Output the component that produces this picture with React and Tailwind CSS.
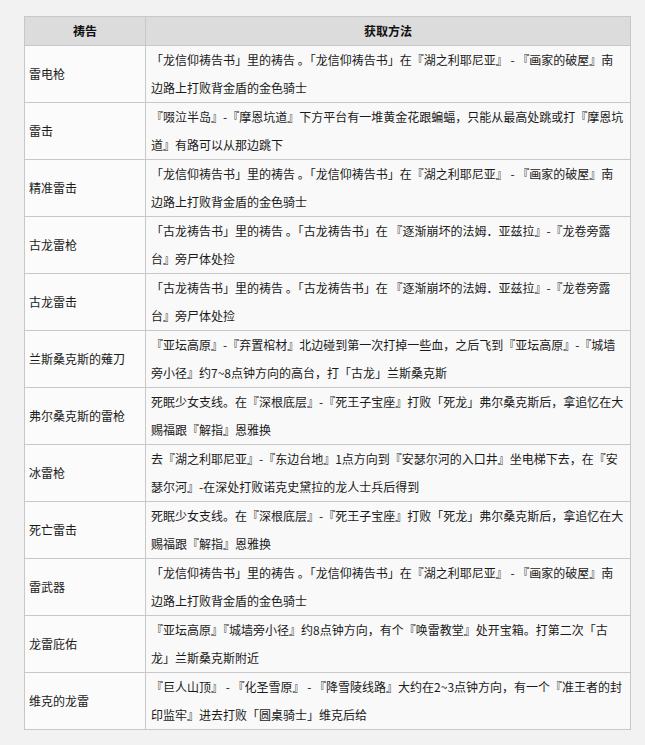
const ROWS = [
  {
    name: '雷电枪',
    how: '「龙信仰祷告书」里的祷告 。「龙信仰祷告书」在『湖之利耶尼亚』 - 『画家的破屋』南边路上打败背金盾的金色骑士'
  },
  {
    name: '雷击',
    how: '『啜泣半岛』-『摩恩坑道』下方平台有一堆黄金花跟蝙蝠，只能从最高处跳或打『摩恩坑道』有路可以从那边跳下'
  },
  {
    name: '精准雷击',
    how: '「龙信仰祷告书」里的祷告 。「龙信仰祷告书」在『湖之利耶尼亚』 - 『画家的破屋』南边路上打败背金盾的金色骑士'
  },
  {
    name: '古龙雷枪',
    how: '「古龙祷告书」里的祷告 。「古龙祷告书」在 『逐渐崩坏的法姆．亚兹拉』-『龙卷旁露台』旁尸体处捡'
  },
  {
    name: '古龙雷击',
    how: '「古龙祷告书」里的祷告 。「古龙祷告书」在 『逐渐崩坏的法姆．亚兹拉』-『龙卷旁露台』旁尸体处捡'
  },
  {
    name: '兰斯桑克斯的薙刀',
    how: '『亚坛高原』-『弃置棺材』北边碰到第一次打掉一些血，之后飞到『亚坛高原』-『城墙旁小径』约7~8点钟方向的高台，打「古龙」兰斯桑克斯'
  },
  {
    name: '弗尔桑克斯的雷枪',
    how: '死眠少女支线。在『深根底层』-『死王子宝座』打败「死龙」弗尔桑克斯后，拿追忆在大赐福跟『解指』恩雅换'
  },
  {
    name: '冰雷枪',
    how: '去『湖之利耶尼亚』-『东边台地』1点方向到『安瑟尔河的入口井』坐电梯下去，在『安瑟尔河』-在深处打败诺克史黛拉的龙人士兵后得到'
  },
  {
    name: '死亡雷击',
    how: '死眠少女支线。在『深根底层』-『死王子宝座』打败「死龙」弗尔桑克斯后，拿追忆在大赐福跟『解指』恩雅换'
  },
  {
    name: '雷武器',
    how: '「龙信仰祷告书」里的祷告 。「龙信仰祷告书」在『湖之利耶尼亚』 - 『画家的破屋』南边路上打败背金盾的金色骑士'
  },
  {
    name: '龙雷庇佑',
    how: '『亚坛高原』『城墙旁小径』约8点钟方向，有个『唤雷教堂』处开宝箱。打第二次「古龙」兰斯桑克斯附近'
  },
  {
    name: '维克的龙雷',
    how: '『巨人山顶』 - 『化圣雪原』 - 『降雪陵线路』大约在2~3点钟方向，有一个『准王者的封印监牢』进去打败「圆桌骑士」维克后给'
  }
];

export default function App() {
  return (
    <div
      className="min-h-screen bg-[#f2f2f2] pl-[24px] pt-[16px] pb-[16px] text-[12px] text-[#1a1a1a]"
      style={{ fontFamily: '"Microsoft YaHei", "Noto Sans CJK SC", "Noto Sans", sans-serif' }}
    >
      <div className="w-[607px] border-l border-t border-[#c8c8c8]">
        <div className="grid grid-cols-[121px_485px] bg-[#dcdcdc] font-bold text-[#111]">
          <div className="border-r border-b border-[#c8c8c8] text-center leading-[28px]">祷告</div>
          <div className="border-r border-b border-[#c8c8c8] text-center leading-[28px]">获取方法</div>
        </div>

        {ROWS.map((row, i) => (
          <div key={i} className="grid grid-cols-[121px_485px] bg-[#f9f9f9]">
            <div className="flex items-center border-r border-b border-[#c8c8c8] bg-[#fbfbfb] px-1">
              {row.name}
            </div>
            <div className="border-r border-b border-[#c8c8c8] px-[5px] leading-[28px] h-[57px]">
              {row.how}
            </div>
          </div>
        ))}
      </div>
    </div>
  );
}
